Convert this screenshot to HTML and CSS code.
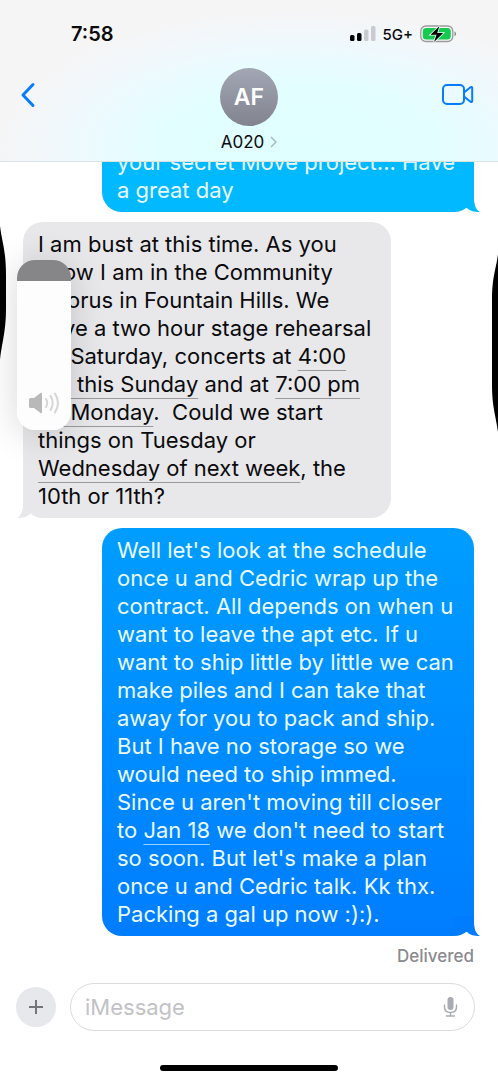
FILE: index.html
```html
<!DOCTYPE html>
<html lang="en">
<head>
<meta charset="utf-8">
<meta name="viewport" content="width=device-width, initial-scale=1">
<title>Messages</title>
<link rel="stylesheet" href="styles.css">
</head>
<body>
<header class="top">
  <div class="status">
    <span class="time">7:58</span>
    <div class="signals">
      <svg class="bars" viewBox="0 0 26 16" aria-hidden="true"><rect x="0" y="9" width="4.500" height="6" rx="1.500"/><rect x="7" y="7" width="4.500" height="8" rx="1.500"/><rect class="dim" x="14" y="3.500" width="4.500" height="11.500" rx="1.500"/><rect class="dim" x="21" y="0" width="4.500" height="15" rx="1.500"/></svg>
      <span class="network">5G+</span>
      <svg class="battery" viewBox="0 0 37 18" aria-hidden="true"><rect x=".8" y="1" width="32" height="15.500" rx="5" fill="none" stroke="#9b9b9b" stroke-width="1.300"/><rect x="2.800" y="3" width="28" height="11.500" rx="3.500" fill="#16c950"/><path d="M34.500 6.500c2 .7 2 4 0 4.700z" fill="#888"/><path d="M19.500 1 10.500 9.800h6L14 17l9.200-9h-6z" fill="#000" stroke="#effcf3" stroke-width="1.600" paint-order="stroke"/></svg>
    </div>
  </div>
  <nav class="nav">
    <button class="icon-btn" aria-label="Back"><svg class="back" viewBox="0 0 16 26"><path d="M13 2.500 3 13l10 10.500"/></svg></button>
    <button class="contact">
      <span class="avatar">AF</span>
      <span class="name">A020<svg class="chev" viewBox="0 0 7 12"><path d="m1 1 5 5-5 5"/></svg></span>
    </button>
    <button class="icon-btn end" aria-label="Video call"><svg class="video" viewBox="0 0 32 22"><rect x="1" y="1" width="21" height="19" rx="4"/><path d="m22 8.500 6.500-5.300c.8-.6 1.700-.3 1.700.7v13.200c0 1-.9 1.300-1.700.7L22 12.500"/></svg></button>
  </nav>
</header>

<main class="thread">
  <div class="bubble sent earlier">your secret Move project... Have<br>a great day
    <svg class="tail" viewBox="0 0 26 20" aria-hidden="true"><path d="M20 0V6C20 13 22 18 26 20 20 20 16 19 13 16L0 10V0z"/></svg>
  </div>
  <div class="bubble received">I am bust at this time. As you<br>know I am in the Community<br>Chorus in Fountain Hills. We<br>have a two hour stage rehearsal<br>on Saturday, concerts at <a href="#">4:00<br>pm this Sunday</a> and at <a href="#">7:00 pm<br>on Monday</a>.&nbsp; Could we start<br>things on Tuesday or<br><a href="#">Wednesday of next week</a>, the<br>10th or 11th?
    <svg class="tail" viewBox="0 0 26 20" aria-hidden="true"><path d="M20 0V6C20 13 22 18 26 20 20 20 16 19 13 16L0 10V0z"/></svg>
  </div>
  <div class="bubble sent latest">Well let's look at the schedule<br>once u and Cedric wrap up the<br>contract. All depends on when u<br>want to leave the apt etc. If u<br>want to ship little by little we can<br>make piles and I can take that<br>away for you to pack and ship.<br>But I have no storage so we<br>would need to ship immed.<br>Since u aren't moving till closer<br>to <a href="#">Jan 18</a> we don't need to start<br>so soon. But let's make a plan<br>once u and Cedric talk. Kk thx.<br>Packing a gal up now :):).
    <svg class="tail" viewBox="0 0 26 20" aria-hidden="true"><path d="M20 0V6C20 13 22 18 26 20 20 20 16 19 13 16L0 10V0z"/></svg>
  </div>
  <p class="receipt">Delivered</p>
</main>

<footer class="composer">
  <button class="add" aria-label="Add attachment"><svg viewBox="0 0 16 16"><path d="M8 1v14M1 8h14"/></svg></button>
  <div class="field">
    <input type="text" aria-label="Message" placeholder="iMessage">
    <button class="mic" aria-label="Dictate"><svg viewBox="0 0 14 20"><rect x="4" y="0" width="6" height="13" rx="3" fill="#a9abb3"/><path d="M1 8v2c0 3.500 2.500 5.500 6 5.500s6-2 6-5.500V8M7 15.500V19M3 19h8" fill="none" stroke="#a9abb3" stroke-width="1.400" stroke-linecap="round"/></svg></button>
  </div>
</footer>
<div class="home"></div>

<svg class="press press-left" viewBox="0 0 6 134" preserveAspectRatio="none" aria-hidden="true"><path d="M0 0C2 16 6 24 6 50V82C6 106 2 116 0 134z"/></svg>
<svg class="press press-right" viewBox="0 0 6 178" preserveAspectRatio="none" aria-hidden="true"><path d="M6 0C4 16 0 22 0 48V130C0 154 4 162 6 178z"/></svg>
<label class="volume">
  <input type="range" min="0" max="100" value="88" aria-label="Volume">
  <svg viewBox="0 0 32 22" aria-hidden="true"><path d="M1 7.500Q1 6 2.500 6H6l6.500-5Q14 0 14 2v18q0 2-1.500 1L6 16H2.500Q1 16 1 14.500z" fill="#b9b9b9"/><path d="M18 7q2.500 4 0 8M22.500 4q4.500 7 0 14M27 1.500q6 9.500 0 19" fill="none" stroke="#d6d6d6" stroke-width="2" stroke-linecap="round"/></svg>
</label>
</body>
</html>
```
FILE: styles.css
```css
* { box-sizing: border-box; }

body {
  margin: 0;
  height: 100vh;
  display: flex;
  flex-direction: column;
  position: relative;
  overflow: hidden;
  background: #fff;
  color: #0b0b0d;
  font-family: Inter, "Liberation Sans", sans-serif;
}

button {
  border: 0;
  padding: 0;
  background: none;
  font: inherit;
  color: inherit;
}

svg { display: block; }

/* Header */
.top {
  flex: none;
  height: 162px;
  border-bottom: 1px solid #d9e2e4;
  background:
    radial-gradient(ellipse 60% 85% at 60% 92%, #e0ffff 0%, #e2feff 45%, #eafbff 65%, #f1f8fc 82%, transparent 100%),
    #f5f5f6;
}

.status {
  height: 68px;
  padding: 0 41px 0 71px;
  display: flex;
  align-items: center;
  justify-content: space-between;
}

.time { font-size: 20px; font-weight: 600; }
.signals { display: flex; align-items: center; gap: 7px; }
.network { font-size: 15px; font-weight: 500; }
.bars { width: 26px; height: 16px; }
.dim { fill: #c9cccf; }
.battery { width: 37px; height: 18px; }

.nav {
  display: grid;
  grid-template-columns: 1fr auto 1fr;
  padding: 0 20px;
}

.icon-btn { height: 54px; justify-self: start; }
.end { justify-self: end; padding-right: 4px; }
.back { width: 16px; height: 26px; fill: none; stroke: #087cff; stroke-width: 3; stroke-linecap: round; stroke-linejoin: round; }
.video { width: 32px; height: 22px; fill: none; stroke: #087cff; stroke-width: 2; stroke-linejoin: round; }

.contact { display: flex; flex-direction: column; align-items: center; gap: 6px; }

.avatar {
  width: 58px;
  height: 58px;
  border-radius: 50%;
  display: grid;
  place-items: center;
  background: linear-gradient(#a3a7b5, #81838e);
  color: #fff;
  font-size: 23px;
  font-weight: 600;
}

.name { display: flex; align-items: center; gap: 6px; font-size: 17px; line-height: 20px; }
.chev { width: 7px; height: 12px; fill: none; stroke: #a9bcc4; stroke-width: 1.5; }

/* Conversation */
.thread {
  flex: 1;
  min-height: 0;
  overflow: hidden;
  padding: 0 24px 5px 23px;
  display: flex;
  flex-direction: column;
  justify-content: flex-end;
  gap: 10px;
}

.bubble {
  flex: none;
  position: relative;
  isolation: isolate;
  padding: 8px 15px;
  border-radius: 20px;
  font-size: 22px;
  line-height: 28px;
  white-space: nowrap;
}

.bubble a {
  color: inherit;
  text-decoration: underline 1px #9a9a9e;
  text-underline-offset: 6px;
}

.sent { align-self: flex-end; width: 372px; color: #eafaff; }
.sent a { text-decoration-color: #9ad2ff; }
.received { align-self: flex-start; width: 368px; background: #e8e8ea; }
.earlier { background: #00b9ff; border-top-left-radius: 0; border-top-right-radius: 0; }
.latest { background: linear-gradient(#009dff, #007dff); }

.tail { position: absolute; z-index: -1; right: -6px; bottom: 0; width: 26px; height: 20px; fill: #007dff; }
.earlier .tail { fill: #00b9ff; }
.received .tail { right: auto; left: -6px; transform: scaleX(-1); fill: #e8e8ea; }

.receipt {
  margin: 0;
  align-self: flex-end;
  font-size: 17px;
  line-height: 20px;
  font-weight: 500;
  color: #8a8a8f;
}

/* Composer */
.composer {
  flex: none;
  padding: 12px 23px 0 16px;
  display: flex;
  align-items: center;
  gap: 14px;
}

.add {
  width: 40px;
  height: 40px;
  border-radius: 50%;
  background: #e7e8ec;
  display: grid;
  place-items: center;
}
.add svg { width: 16px; height: 16px; stroke: #747479; stroke-width: 2; }

.field {
  flex: 1;
  height: 48px;
  padding: 0 16px 0 14px;
  border: 1px solid #dcdcdf;
  border-radius: 24px;
  display: flex;
  align-items: center;
}

.field input {
  flex: 1;
  min-width: 0;
  border: 0;
  padding: 0;
  outline: 0;
  background: none;
  font: inherit;
  font-size: 22px;
}
.field input::placeholder { color: #c2c2c6; opacity: 1; }
.mic svg { width: 15px; height: 20px; }

.home {
  flex: none;
  align-self: center;
  width: 178px;
  height: 6px;
  margin: 34px 0 9px;
  border-radius: 3px;
  background: #000;
}

/* Volume overlay */
.volume {
  position: absolute;
  left: 17px;
  top: 260px;
  width: 54px;
  height: 170px;
  border-radius: 18px;
  overflow: hidden;
  background: linear-gradient(#868688 21px, #fdfdfd 21px);
  box-shadow: 0 4px 36px rgba(0, 0, 0, .16);
  display: flex;
  align-items: flex-end;
  justify-content: center;
  padding-bottom: 16px;
}
.volume input { position: absolute; inset: 0; width: 100%; height: 100%; margin: 0; opacity: 0; writing-mode: vertical-lr; direction: rtl; }
.volume svg { width: 32px; height: 22px; }

.press { position: absolute; width: 6px; fill: #000; }
.press-left { left: 0; top: 226px; height: 134px; }
.press-right { right: 0; top: 254px; height: 178px; }
```
